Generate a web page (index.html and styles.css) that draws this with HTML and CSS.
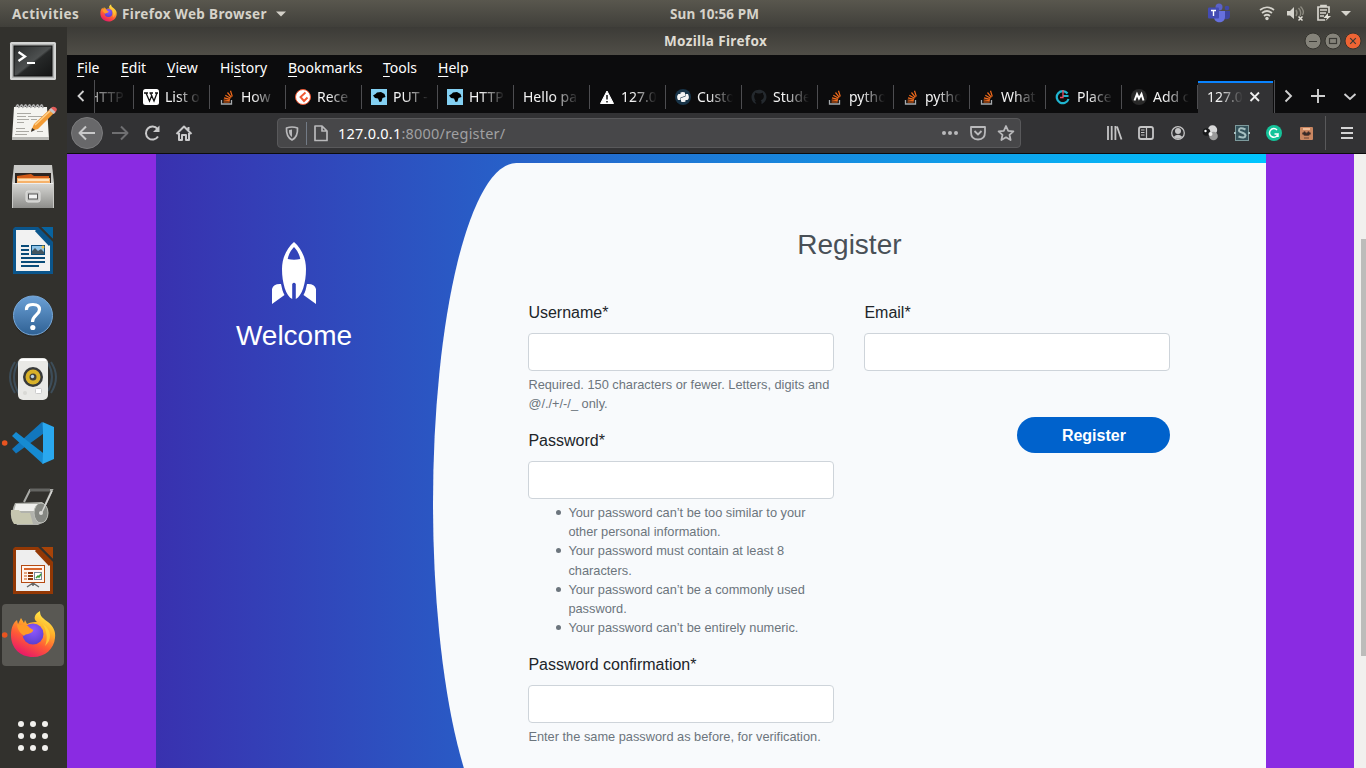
FILE: index.html
```html
<!DOCTYPE html>
<html lang="en">
<head>
<meta charset="utf-8">
<title>Register</title>
<link rel="stylesheet" href="styles.css">
</head>
<body>
<svg class="defs" aria-hidden="true">
  <defs>
    <linearGradient id="flame" x1="0.8" y1="0" x2="0.3" y2="1"><stop offset="0" stop-color="#fff44f"/><stop offset=".35" stop-color="#ffb02a"/><stop offset=".65" stop-color="#ff5a36"/><stop offset="1" stop-color="#e7156b"/></linearGradient>
    <radialGradient id="globe" cx=".5" cy=".3" r=".7"><stop offset="0" stop-color="#9059ff"/><stop offset="1" stop-color="#5b3fd0"/></radialGradient>
    <linearGradient id="metal" x1="0" y1="0" x2="0" y2="1"><stop offset="0" stop-color="#d8d8d5"/><stop offset="1" stop-color="#8e8e8b"/></linearGradient>
    <linearGradient id="screen" x1="0" y1="0" x2="1" y2="1"><stop offset="0" stop-color="#2a2c2c"/><stop offset=".5" stop-color="#4d5050"/><stop offset=".55" stop-color="#262828"/><stop offset="1" stop-color="#141515"/></linearGradient>
    <linearGradient id="ball" x1="0" y1="0" x2="0" y2="1"><stop offset="0" stop-color="#6ba0d6"/><stop offset="1" stop-color="#2f6194"/></linearGradient>
    <symbol id="firefox" viewBox="0 0 46 48">
      <path d="M23 47C10 47 1 38 1 25C1 17 4 12 7 10L8 14L11 8L14 13L15 10L17 14C21 12 25 12 27 12C22 8 26 3 30 1C30 7 33 8 38 12C43 16 46 21 45 28C44 39 35 47 23 47Z" fill="url(#flame)"/>
      <circle cx="23" cy="24" r="10.500" fill="url(#globe)"/>
      <path d="M7 14C11 16 15 14 18 16C20 19 24 19 23 21C20 25 16 23 14 26C10 23 7 19 7 14Z" fill="#ff9a27"/>
      <path d="M33 14C42 20 42 30 35 36C38 29 37 22 33 14Z" fill="#ffd43a" opacity=".75"/>
    </symbol>
    <symbol id="stack" viewBox="0 0 16 16">
      <path d="M2.500 11V15H12.500V11" fill="none" stroke="#a7abae" stroke-width="1.300"/>
      <path d="M4.500 13H10.700M4.600 11L10.800 11.600M5 8.800L11 10.400M6.300 6.200L11.600 9.200M8.500 3.500L12.400 8.300M11.500 1.800L13.300 7.500" stroke="#f16b1c" stroke-width="1.200"/>
    </symbol>
    <symbol id="put" viewBox="0 0 16 16"><path d="M0 0H16V16H0Z" fill="#83d0f2"/><path d="M2 6.500L4.500 5L6 3.500L10 3L13.500 5L14.500 8L11.500 9L10.500 12.500L8.500 13L7 9.500L4 9Z" fill="#000"/></symbol>
  </defs>
</svg>

<header class="topbar">
  <span class="activities">Activities</span>
  <svg class="app-icon" width="17" height="18"><use href="#firefox"/></svg>
  <span class="app-name">Firefox Web Browser</span>
  <svg class="caret" width="10" height="6"><path d="M0 .5H10L5 5.500Z" fill="#d3d0c8"/></svg>
  <span class="clock">Sun 10:56 PM</span>
  <svg class="tray" width="150" height="27" viewBox="1204 0 150 27">
    <circle cx="1219" cy="7" r="3.500" fill="#5b62c8"/><circle cx="1227" cy="8" r="2.300" fill="#4149a5"/>
    <path d="M1224 11H1230V16C1230 20 1225 20 1224 18Z" fill="#3d459e"/><path d="M1214 11H1225V17C1225 24 1214 24 1214 17Z" fill="#6670dd"/>
    <rect x="1208" y="7.500" width="11" height="11" rx="1" fill="#434bb3"/><path d="M1211 10.500H1216M1213.500 10.500V16" stroke="#fff" stroke-width="1.400"/>
    <g fill="none" stroke="#d6d4cd" stroke-width="1.700"><path d="M1260 10Q1267 4.500 1274 10" /><path d="M1262 13Q1267 9 1272 13"/><path d="M1264 16Q1267 13.500 1270 16"/></g><circle cx="1267" cy="18.500" r="1.700" fill="#d6d4cd"/>
    <path d="M1287 11H1290L1294 7V19L1290 15.500H1287Z" fill="#d6d4cd"/><path d="M1296 10Q1298 13 1296 16M1298.500 8Q1302 12 1300 16M1300.500 6.500Q1305 11 1302.500 15" fill="none" stroke="#8b897f" stroke-width="1.400"/><path d="M1298.500 16.500L1302.500 20.500M1302.500 16.500L1298.500 20.500" stroke="#e4e2da" stroke-width="1.500"/>
    <path d="M1325 20H1318V7H1329V13M1321 7V5.500H1326V7M1320 10H1327M1320 13H1326M1320 16H1324" fill="none" stroke="#d6d4cd" stroke-width="1.700"/><path d="M1328 13L1323.500 18H1327L1325.500 21L1331 16H1328Z" fill="#e4e2da"/>
    <path d="M1341 11H1351L1346 16Z" fill="#d6d4cd"/>
  </svg>
</header>

<div class="desktop">
  <nav class="dock">
    <svg class="dock-icon" viewBox="0 27 66 64"><rect x="10" y="42" width="46" height="38" rx="1.500" fill="#d4d5d4"/><rect x="12" y="44" width="42" height="34" fill="#b0b2b1"/><rect x="14" y="46" width="38" height="30" fill="url(#screen)" stroke="#111"/><path d="M18.500 52L25 56.500L18.500 61" fill="none" stroke="#fff" stroke-width="2.300"/><path d="M27 63H35" stroke="#fff" stroke-width="2"/></svg>
    <svg class="dock-icon" viewBox="0 91 66 64"><path d="M14 107H47L49 139H12Z" fill="#f4f4f0"/><path d="M12 137H49V140H12Z" fill="#b9b9b5"/><path d="M16 107Q18 102 19 108M20 107Q22 102 23 108M24 107Q26 102 27 108M28 107Q30 102 31 108M32 107Q34 102 35 108M36 107Q38 102 39 108M40 107Q42 102 43 108" fill="none" stroke="#aaa" stroke-width="1.700"/><path d="M17 113.500H31M17 116.500H26M28 116.500H43M17 119.500H29M31 119.500H37M17 122.500H24M16 128.500H25M16 131.500H29M37 131.500H43M15 134.500H27" stroke="#aaa9a3"/><path d="M31 131L34 124L50 109L54 113L38 129Z" fill="#f29b35"/><path d="M35 125L51 110" stroke="#ffd08a" stroke-width="1.500"/><path d="M49 110L52 107Q55 106 57 109Q57 111 54 114Z" fill="#e35d5a"/><path d="M49 110L51 108L55.500 112L53.500 114Z" fill="#c6c6c6"/><path d="M31 132L32 128L35 130Z" fill="#333"/></svg>
    <svg class="dock-icon" viewBox="0 155 66 64"><path d="M14 165H52L54 183V208H12V183Z" fill="#c9c9c6"/><rect x="15" y="173" width="36" height="12" fill="#2d2622"/><path d="M17 176L31 174L34 176H49V184H17Z" fill="#d35c18"/><path d="M17 178H50V184H17Z" fill="#f6b26a"/><path d="M18 180H49" stroke="#fff3dc" stroke-width="1.500"/><path d="M13 183H53V208H13Z" fill="url(#metal)"/><path d="M13 183.500H53" stroke="#eee"/><rect x="26" y="191" width="14" height="11" rx="2" fill="#c9c9c7" stroke="#e1e1df"/><rect x="28.500" y="194" width="9" height="5" fill="#f3f3f3" stroke="#555"/></svg>
    <svg class="dock-icon" viewBox="0 219 66 64"><path d="M15 227H39L53 241V274H13V229Z" fill="#0b558b"/><path d="M16 230H36L50 245V271H16Z" fill="#f2f2f2"/><path d="M41 227H53V239Z" fill="#08639f"/><path d="M39 226.500L53.500 241" stroke="#32312d" stroke-width="2"/><path d="M36 230L50 245" stroke="#0b558b" stroke-width="3"/><path d="M21 246H29M21 250H29M21 254H29M21 258H45M21 262H45M21 266H39" stroke="#0a4c79" stroke-width="2"/><rect x="31.500" y="245.500" width="13" height="9" fill="#8fc4e8" stroke="#0a4c79"/><path d="M32 254V251L35 248L38 251L41 249L44 252V254Z" fill="#44565f"/><circle cx="43" cy="247" r="1.500" fill="#f2c64b"/></svg>
    <svg class="dock-icon" viewBox="0 283 66 64"><circle cx="33" cy="317" r="20" fill="#25241f" opacity=".5"/><circle cx="33" cy="315.500" r="19.500" fill="url(#ball)" stroke="#79a9d9"/><path d="M26.500 310C26 304.500 31 304.500 33 304.500C38 304.500 39.500 307 39.500 309.500C39.500 315 32.500 315 32.500 322" fill="none" stroke="#fff" stroke-width="3.200"/><circle cx="32.800" cy="327.500" r="2.600" fill="#fff"/></svg>
    <svg class="dock-icon" viewBox="0 347 66 64"><g fill="none" stroke="#456078" stroke-width="2" opacity=".6"><path d="M15 362Q5 377 15 393M19 361Q9 377 19 394M51 362Q61 377 51 393M48 363Q56 377 48 391"/></g><rect x="18" y="358" width="30" height="42" rx="5" fill="#e9e9e6"/><path d="M20 360H46" stroke="#fff" stroke-width="2"/><circle cx="33" cy="377" r="10" fill="#383a3a"/><circle cx="33" cy="377" r="7.500" fill="#d9b229"/><circle cx="33" cy="377" r="3.500" fill="#45423a"/><circle cx="32.500" cy="376.500" r="1.700" fill="#b9d4e8"/><rect x="35.500" y="388.500" width="6" height="5" rx="1" fill="#fff" stroke="#ccc"/><circle cx="25" cy="393" r="2" fill="#d9d9d5"/></svg>
    <svg class="dock-icon" viewBox="0 411 66 64"><circle cx="4.700" cy="443" r="2.800" fill="#e95420"/><path d="M12 449L16 453.500L47 431L42 422Z" fill="#1277bd"/><path d="M12 436L16 432L47 456L43 464Z" fill="#168bd2"/><path d="M42.500 422L54 427V459L42.500 464L43 454V432Z" fill="#2aa8ef"/></svg>
    <svg class="dock-icon" viewBox="0 475 66 64"><path d="M24 502L30 490H52L42 512" fill="none" stroke="#a9aaa6" stroke-width="2"/><path d="M30 490H50" stroke="#646562" stroke-width="3"/><path d="M15 503L42 502Q49 507 46 521L38 525H17Q9 515 15 503Z" fill="#b1b2ac"/><path d="M16 504H38V511H14Z" fill="#f0f0ed"/><ellipse cx="41" cy="513" rx="7" ry="10" fill="#858782" stroke="#bec0ba"/><circle cx="41" cy="513" r="2" fill="#dcdcd8"/><path d="M11 510H19L21 513H30L33 524H14Q10 519 11 510Z" fill="#c6c6af"/><path d="M52 491L42 512" stroke="#d5d5d2" stroke-width="1.500"/></svg>
    <svg class="dock-icon" viewBox="0 539 66 64"><path d="M15 547H39L53 561V594H13V549Z" fill="#933805"/><path d="M16 550H36L50 565V591H16Z" fill="#eee"/><path d="M41 547H53V559Z" fill="#a74308"/><path d="M39 546.500L53.500 561" stroke="#32312d" stroke-width="2"/><path d="M36 550L50 565" stroke="#933805" stroke-width="3"/><rect x="21.500" y="565.500" width="23" height="17" fill="#fff5ee" stroke="#b54a12"/><path d="M24 569H42" stroke="#d8652b" stroke-width="2"/><path d="M24 573H27M24 576H27M24 579H27" stroke="#e6a47d" stroke-width="2"/><path d="M28 573H33M28 576H33M28 579H33" stroke="#8d3709" stroke-width="2"/><rect x="34.500" y="572.500" width="7" height="7" fill="#fff" stroke="#789"/><path d="M36 578L38 576L39 577L41 574" fill="none" stroke="#3a9c34" stroke-width="1.500"/><path d="M33 583L27 587M33 583L39 587M33 583V586" stroke="#666" stroke-width="1.500"/></svg>
    <svg class="dock-icon" viewBox="0 603 66 64"><rect x="2" y="604" width="62" height="62" rx="4" fill="#595853"/><use href="#firefox" x="10" y="610" width="46" height="48"/><circle cx="4.700" cy="635" r="2.800" fill="#e95420"/></svg>
    <div class="apps-grid"><i></i><i></i><i></i><i></i><i></i><i></i><i></i><i></i><i></i></div>
  </nav>

  <main class="window">
    <div class="titlebar">
      <span class="window-title">Mozilla Firefox</span>
      <svg class="window-buttons" width="60" height="28" viewBox="1303 27 60 28"><g stroke="#35342f"><circle cx="1313" cy="41" r="8" fill="#85837a"/><circle cx="1333" cy="41" r="8" fill="#85837a"/><circle cx="1353" cy="41" r="8" fill="#ee6434"/></g><g fill="none" stroke="#3b3a35" stroke-width="1.200"><path d="M1309 41.500H1317M1350.200 38.200L1355.800 43.800M1355.800 38.200L1350.200 43.800"/><rect x="1329.500" y="38.500" width="7" height="5"/></g></svg>
    </div>
    <div class="menubar"><span class="m1"><u>F</u>ile</span><span class="m2"><u>E</u>dit</span><span class="m3"><u>V</u>iew</span><span class="m4">Hi<u>s</u>tory</span><span class="m5"><u>B</u>ookmarks</span><span class="m6"><u>T</u>ools</span><span class="m7"><u>H</u>elp</span></div>

    <div class="tabstrip">
      <div class="scroll-left"><svg width="8" height="12"><path d="M6.500 1L1.500 6L6.500 11" fill="none" stroke="#d0d0d0" stroke-width="1.800"/></svg></div>
      <div class="tabs">
        <div class="tab cut"><span>HTTP</span></div>
        <div class="tab"><svg width="16" height="16"><rect width="16" height="16" rx="2.500" fill="#fff"/><path d="M1 4H5M6.500 4H10M12 4H15M3 4L6.500 12L9 6M7.500 4L11 12L14 4" fill="none" stroke="#111" stroke-width="1.300"/></svg><span>List o</span></div>
        <div class="tab"><svg width="16" height="16"><use href="#stack"/></svg><span>How</span></div>
        <div class="tab"><svg width="16" height="16"><circle cx="8" cy="8" r="7.500" fill="#fff" stroke="#f05732"/><path d="M10.500 3.500L5.500 8L9 12L12.500 8.500" fill="none" stroke="#f05732" stroke-width="1.900"/></svg><span>Rece</span></div>
        <div class="tab"><svg width="16" height="16"><use href="#put"/></svg><span>PUT -</span></div>
        <div class="tab"><svg width="16" height="16"><use href="#put"/></svg><span>HTTP</span></div>
        <div class="tab"><span class="wide">Hello pa</span></div>
        <div class="tab"><svg width="16" height="16"><path d="M8 2L14.500 14.500H1.500Z" fill="#fff" stroke="#fff" stroke-linejoin="round"/><path d="M8 6V10.500M8 12V13.500" stroke="#111" stroke-width="1.500"/></svg><span>127.0</span></div>
        <div class="tab"><svg width="16" height="16"><circle cx="8" cy="8" r="8" fill="#193549"/><path d="M5.500 5V3.500Q8 2.300 10 3.500V7L5.500 8.500V11H3Q1 7 3.500 5ZM10.500 11V12.500Q8 13.700 6 12.500V9L10.500 7.500V5H13Q15 9 12.500 11Z" fill="#f4f4f4"/></svg><span>Custo</span></div>
        <div class="tab"><svg width="16" height="16"><path d="M5.500 15C2 14 .5 11 .5 8C.5 3.500 4 .7 8 .7S15.500 3.500 15.500 8C15.500 11.500 13 14.200 10.500 15V12L9.500 11C12 10.700 13 9 12.500 6.500L12 5.500V3.500L10 4.500H6L4 3.500V5.500C2.500 8 4 10.700 6.500 11L5.500 12L3.500 11.500" fill="#24292e"/><path d="M5 12Q3 10 3.500 6L5 4L7 5H9L11 4L12.500 6Q13 10 9.500 11L10 15H6Z" fill="#0c0c0d"/></svg><span>Stude</span></div>
        <div class="tab"><svg width="16" height="16"><use href="#stack"/></svg><span>pytho</span></div>
        <div class="tab"><svg width="16" height="16"><use href="#stack"/></svg><span>pytho</span></div>
        <div class="tab"><svg width="16" height="16"><use href="#stack"/></svg><span>What</span></div>
        <div class="tab"><svg width="16" height="16"><path d="M12.500 4.500A6 6 0 1 0 13.500 10M13.500 7H8" fill="none" stroke="#20b5d0" stroke-width="2.200"/><path d="M8 1V8.500H5" fill="none" stroke="#ef4a63" stroke-width="1.300"/></svg><span>Place</span></div>
        <div class="tab"><svg width="16" height="16"><circle cx="8" cy="8" r="8" fill="#292929"/><path d="M3.500 11.500L6 5L8 9.500L10.500 5L12.500 11.500" fill="none" stroke="#fff" stroke-width="2"/></svg><span>Add c</span></div>
        <div class="tab active"><span>127.0</span><svg class="close" width="12" height="12"><path d="M1.500 1.500L10 10M10 1.500L1.500 10" stroke="#eee" stroke-width="1.800"/></svg></div>
      </div>
      <svg class="tab-tools" width="93" height="33" viewBox="1273 80 93 33"><path d="M1274.500 80V113" stroke="#4d4d50"/><g fill="none" stroke="#d0d0d0" stroke-width="1.900"><path d="M1285.500 90.500L1291 96L1285.500 101.500M1311 96H1325M1318 89V103M1344.500 94L1350 99L1355.500 94"/></g></svg>
    </div>

    <div class="toolbar">
      <svg class="nav-icons" width="129" height="40" viewBox="71 113 129 40"><circle cx="87" cy="133" r="15.500" fill="#68686a" stroke="#7b7b7d"/><g fill="none" stroke="#c9c9ca" stroke-width="2" stroke-linejoin="round"><path d="M80 133H95M86 126.500L79.500 133L86 139.500"/><path d="M112 133H127M121 126.500L127.500 133L121 139.500" stroke="#6f6f71"/><path d="M157.500 129A6.500 6.500 0 1 0 158 136.500"/><path d="M176.500 134L184 126.500L191.500 134M179 133V140H182V135H186V140H189V133M188.500 130V127"/></g><path d="M159.500 125.500V132H153Z" fill="#c9c9ca"/></svg>
      <div class="urlbar">
        <svg width="60" height="28" viewBox="278 119 60 28"><g fill="none" stroke="#b9b9bb" stroke-width="1.700" stroke-linejoin="round"><path d="M286.500 128Q292 126 297.500 128Q298 137 292 140Q286 137 286.500 128Z"/><path d="M315 126H322L327 131V140.500H315ZM322 126V131H327"/></g><path d="M292 129.500Q288.500 129.500 289 131Q289 135 292 137Z" fill="#b9b9bb"/><path d="M306.500 122V145" stroke="#737b86"/></svg>
        <span class="url"><b>127.0.0.1</b>:8000/register/</span>
        <svg class="url-tools" width="80" height="28" viewBox="940 119 80 28"><g fill="#b9b9bb"><circle cx="944" cy="133" r="2"/><circle cx="950" cy="133" r="2"/><circle cx="956" cy="133" r="2"/></g><g fill="none" stroke="#b9b9bb" stroke-width="1.800" stroke-linejoin="round"><path d="M971 127H985V132Q985 139.500 978 139.500Q971 139.500 971 132ZM974.500 131L978 134.500L981.500 131"/><path d="M1006 126L1008.200 130.800L1013.400 131.300L1009.500 134.800L1010.600 140L1006 137.300L1001.400 140L1002.500 134.800L998.600 131.300L1003.800 130.800Z"/></g></svg>
      </div>
      <svg class="extensions" width="268" height="40" viewBox="1098 113 268 40"><g fill="none" stroke="#c5c5c6" stroke-width="1.800"><path d="M1108 126V140M1111.700 126V140M1115.400 126V140M1117 126.500L1121.500 139.500"/><rect x="1139" y="127" width="14" height="12" rx="2"/><path d="M1146.500 127V139M1141 130H1144.500M1141 132.500H1144.500M1141 135H1144.500" stroke-width="1.200"/><circle cx="1178" cy="133" r="6.300" stroke-width="1.300"/></g><circle cx="1178" cy="131" r="3" fill="#c5c5c6"/><path d="M1173.500 137Q1178 132.500 1182.500 137Q1178 140.500 1173.500 137Z" fill="#c5c5c6"/><circle cx="1212.500" cy="130" r="4.700" fill="#d8d8d8"/><circle cx="1213.500" cy="136" r="4.300" fill="#9b9b9b"/><circle cx="1206.500" cy="132" r="3.800" fill="#18191a"/><circle cx="1205.500" cy="131" r="1.200" fill="#fff"/><circle cx="1210.500" cy="134" r="2" fill="#f0f0f0"/><rect x="1235.500" y="125.500" width="13" height="15" fill="#34525a" stroke="#7d9a9c"/><path d="M1245.500 129.500Q1239 126.500 1239 130.500C1239 133 1245.500 132 1245.500 135.500Q1245 139 1238.500 136.500M1234 133H1236M1248 133H1250" fill="none" stroke="#a5bfc0" stroke-width="2"/><circle cx="1274" cy="133" r="8" fill="#15c39a"/><path d="M1277 130A4.300 4.300 0 1 0 1278 134H1274.500M1278 134V137" fill="none" stroke="#fff" stroke-width="1.500"/><rect x="1300" y="127" width="13" height="13" rx="1" fill="#c98661"/><path d="M1303 129H1310" stroke="#f1bd99" stroke-width="2"/><path d="M1302 133.500L1304.500 131.500L1306.500 133L1308.500 131.500L1311 133.500L1308.500 135.500H1304.500ZM1304 138H1309" fill="#392b29" stroke="#6b4435"/><path d="M1325.500 116V150" stroke="#59595b"/><path d="M1341 128H1353M1341 133H1353M1341 138H1353" stroke="#d4d4d5" stroke-width="2"/></svg>
    </div>

    <div class="viewport">
      <div class="page">
        <section class="register">
          <aside class="welcome">
            <svg width="44" height="64" viewBox="272 242 44 64"><path fill="#fff" fill-rule="evenodd" d="M294 242C302 249 306 259 306 269C306 283 302 296 295.800 299V284Q294 281.500 292.200 284V299C286 296 282 283 282 269C282 259 286 249 294 242ZM294 247C291 250 288.500 254.500 287.700 259Q294 260.300 300.300 259C299.500 254.500 297 250 294 247ZM281 284C282 288 282.500 292 284.500 295L272 304V289Q273.500 283.500 281 284ZM307 284C306 288 305.500 292 303.500 295L316 304V289Q314.500 283.500 307 284Z"/></svg>
            <h3>Welcome</h3>
          </aside>
          <div class="panel">
            <h3>Register</h3>
            <form class="form">
              <div class="column">
                <div class="group"><label for="username">Username*</label><input id="username" type="text"><small>Required. 150 characters or fewer. Letters, digits and @/./+/-/_ only.</small></div>
                <div class="group"><label for="password1">Password*</label><input id="password1" type="password"><small><ul><li>Your password can’t be too similar to your other personal information.</li><li>Your password must contain at least 8 characters.</li><li>Your password can’t be a commonly used password.</li><li>Your password can’t be entirely numeric.</li></ul></small></div>
                <div class="group"><label for="password2">Password confirmation*</label><input id="password2" type="password"><small>Enter the same password as before, for verification.</small></div>
              </div>
              <div class="column">
                <div class="group"><label for="email">Email*</label><input id="email" type="email"></div>
                <button type="button">Register</button>
              </div>
            </form>
          </div>
        </section>
      </div>
      <div class="scrollbar"><div class="thumb"></div></div>
    </div>
  </main>
</div>
</body>
</html>
```
FILE: styles.css
```css
* { box-sizing: border-box; }
body { margin: 0; width: 1366px; height: 768px; overflow: hidden; font-family: "Noto Sans", sans-serif; font-size: 14px; background: #312f2b; }
svg { display: block; flex: none; }
.defs { position: absolute; width: 0; height: 0; }

.topbar { height: 27px; display: flex; align-items: center; background: linear-gradient(#59574e, #403f3a); color: #d5d2c9; font-weight: 700; font-size: 13.500px; white-space: nowrap; }
.activities { width: 87px; padding-left: 12px; letter-spacing: .45px; }
.app-icon { margin: 0 5px 2px 13px; }
.app-name { width: 149px; letter-spacing: .35px; }
.caret { margin: 0 5px; }
.clock { width: 93px; margin-left: 379px; letter-spacing: .1px; }
.tray { margin-left: auto; margin-right: 12px; }

.desktop { display: flex; height: 741px; }
.dock { width: 67px; flex: none; display: flex; flex-direction: column; background: #32312d; }
.dock-icon { width: 66px; height: 64px; }
.apps-grid { margin: 54px 0 0 18px; display: grid; grid-template-columns: repeat(3, 6px); gap: 6px; }
.apps-grid i { width: 6px; height: 6px; border-radius: 50%; background: #f1f0ed; }

.window { width: 1299px; display: flex; flex-direction: column; }
.titlebar { height: 28px; display: flex; align-items: center; background: linear-gradient(#3c3b37, #504e47); color: #dfdbd2; font-weight: 700; font-size: 13.500px; letter-spacing: .35px; }
.window-title { width: 110px; margin-left: 597px; white-space: nowrap; }
.window-buttons { margin-left: auto; margin-right: 3px; }

.menubar { height: 25px; display: flex; align-items: center; gap: 20px; padding-left: 10px; background: #0c0c0d; color: #fff; white-space: nowrap; }
.menubar u { text-underline-offset: 3px; }
.m1 { width: 24px; }
.m2 { width: 26px; }
.m3 { width: 33px; }
.m4 { width: 48px; }
.m5 { width: 75px; }
.m6 { width: 35px; }
.m7 { width: 31px; }

.tabstrip { height: 33px; display: flex; background: #0c0c0d; }
.scroll-left { width: 28px; border-right: 1px solid #4d4d50; display: flex; align-items: center; padding: 0 0 1px 10px; flex: none; }
.tabs { width: 1178px; display: flex; overflow: hidden; }
.tab { width: 76px; flex: none; height: 33px; display: flex; align-items: center; gap: 6px; padding: 0 0 0 9px; color: #f4f4f4; background: linear-gradient(#4d4d50, #4d4d50) right 5px / 1px 24px no-repeat; }
.tab span { width: 40px; white-space: nowrap; -webkit-mask-image: linear-gradient(to right, #000 30%, transparent 36px); mask-image: linear-gradient(to right, #000 30%, transparent 36px); }
.tab .wide { width: 60px; -webkit-mask-image: linear-gradient(to right, #000 50%, transparent 56px); mask-image: linear-gradient(to right, #000 50%, transparent 56px); }
.tab.cut { width: 39px; padding: 0; }
.tab.cut span { margin-left: -6px; width: 38px; -webkit-mask-image: linear-gradient(to right, #bbb, transparent); mask-image: linear-gradient(to right, rgba(0,0,0,.8), transparent); }
.tab.active { width: 75px; gap: 2px; margin-top: 1px; height: 32px; background: #323234; border-top: 2px solid #0a84ff; padding: 0 0 3px 9px; }

.toolbar { height: 41px; display: flex; align-items: center; background: #323234; border-bottom: 1px solid #0c0c0d; padding-left: 4px; }
.urlbar { width: 744px; height: 30px; margin: 0 77px; display: flex; align-items: center; border: 1px solid #59595b; border-radius: 4px; background: #474749; }
.url { color: #a0a0a2; font-size: 14.500px; letter-spacing: .22px; white-space: nowrap; }
.url b { font-weight: 400; color: #fff; }
.url-tools { margin-left: auto; }

.viewport { height: 614px; display: flex; overflow: hidden; }
.page { width: 1287px; padding: 0 88px 0 89px; background: #8a2be2; font-family: "Liberation Sans", Arial, sans-serif; font-size: 16px; line-height: 24px; color: #212529; }
.register { width: 1110px; height: 720px; padding-top: 9px; display: flex; background: linear-gradient(to right, #3931af, #00c6ff); }
.register h3 { margin: 0; font-size: 28px; line-height: 34px; font-weight: 500; text-align: center; }
.welcome { width: 277px; padding: 79px 1px 0 0; display: flex; flex-direction: column; align-items: center; color: #fff; }
.welcome h3 { margin-top: 13px; }
.panel { width: 833px; height: 681px; padding: 65px 95.600px 0 95.400px; background: #f8fafc; border-radius: 10% 0 0 10% / 50% 0 0 50%; }
.panel h3 { color: #495057; }
.form { display: flex; gap: 30px; margin-top: 38.600px; }
.column { width: 306px; flex: none; }
.group { margin-bottom: 16px; }
.group label { display: block; margin-bottom: 8px; }
.group input { display: block; width: 100%; height: 38px; border: 1px solid #ced4da; border-radius: 4px; background: #fff; }
.group small { display: block; margin-top: 4px; font-size: 12.800px; line-height: 19.200px; color: #6c757d; }
.group ul { margin: 0; padding-left: 40px; list-style: none; }
.group li { position: relative; }
.group li::before { content: ""; position: absolute; left: -12px; top: 7px; width: 5px; height: 5px; border-radius: 50%; background: #6c757d; }
button { display: block; width: 153px; height: 36px; margin: 46px 0 0 auto; padding: 2px 0 0; border: 0; border-radius: 24px; background: #0062cc; color: #fff; font: bold 16px "Liberation Sans", Arial, sans-serif; }
.scrollbar { width: 12px; padding: 85px 0 0 7px; background: #f1f0ee; }
.thumb { height: 417px; background: #bcbcba; }
```
